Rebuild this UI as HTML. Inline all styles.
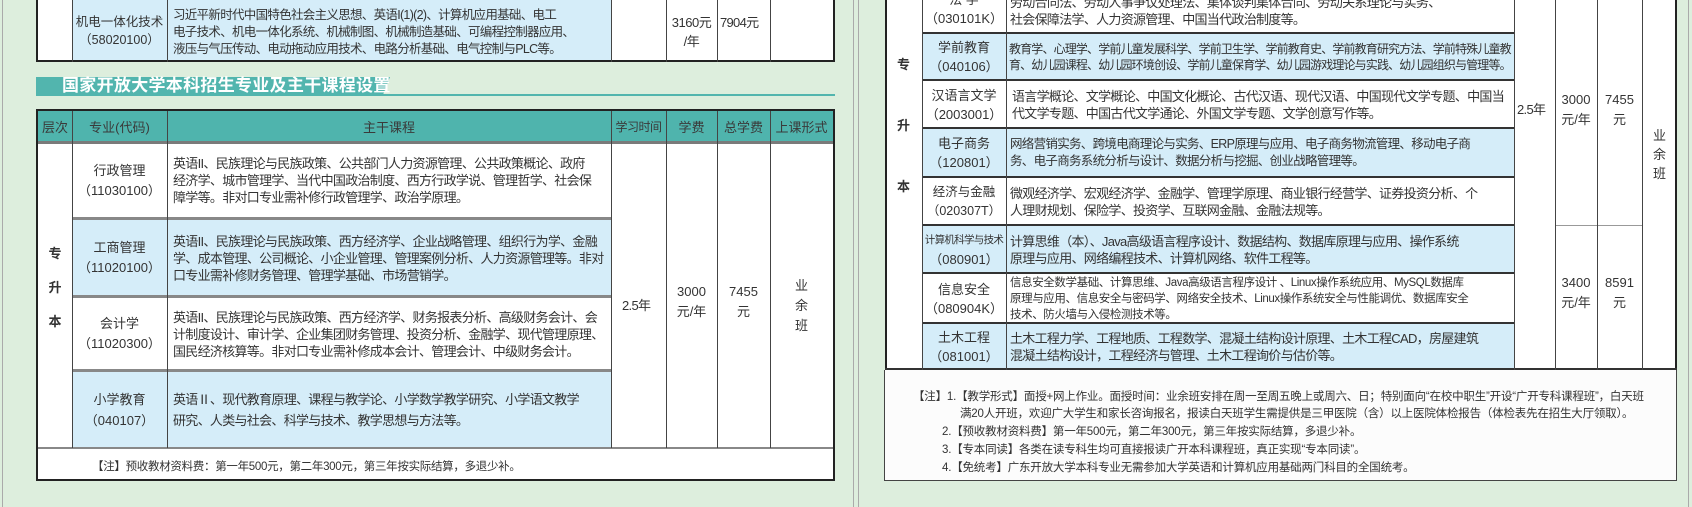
<!DOCTYPE html>
<html><head><meta charset="utf-8"><style>
*{margin:0;padding:0;box-sizing:border-box}
body{width:1692px;height:507px;background:#ddeedd;position:relative;overflow:hidden;font-family:"Liberation Sans","Noto Sans CJK SC",sans-serif;color:#333}
div{position:absolute}
.t{font-size:13px;line-height:17px;white-space:nowrap;letter-spacing:-0.7px}
.cc{display:flex;align-items:center;justify-content:center;text-align:center;flex-direction:column;font-size:13px;line-height:18px;white-space:nowrap}
.h{display:flex;align-items:center;justify-content:center;font-size:13px;color:#3a3a3a;white-space:nowrap}
</style></head><body>
<div style="left:2px;top:0;width:1px;height:507px;background:#aaa"></div>
<div style="left:853px;top:0;width:1px;height:507px;background:#aaa"></div>
<div style="left:858px;top:0;width:1px;height:507px;background:#aaa"></div>
<div style="left:1688px;top:0;width:1px;height:507px;background:#aaa"></div>

<div style="left:36px;top:-2px;width:799px;height:64px;background:#fff;border:2px solid #222;border-top:none"></div>
<div style="left:72px;top:0;width:539px;height:60px;background:#d5edf9"></div>
<div style="left:72px;top:0;width:1px;height:62px;background:#444"></div>
<div style="left:167px;top:0;width:1px;height:62px;background:#444"></div>
<div style="left:611px;top:0;width:1px;height:62px;background:#444"></div>
<div style="left:666px;top:0;width:1px;height:62px;background:#444"></div>
<div style="left:717px;top:0;width:1px;height:62px;background:#444"></div>
<div style="left:770px;top:0;width:1px;height:62px;background:#444"></div>
<div class="cc" style="left:72px;top:0;width:95px;height:62px;font-size:12.5px">机电一体化技术<br>（58020100）</div>
<div class="t" style="left:173px;top:7px;font-size:12.5px">习近平新时代中国特色社会主义思想、英语I(1)(2)、计算机应用基础、电工<br>电子技术、机电一体化系统、机械制图、机械制造基础、可编程控制器应用、<br>液压与气压传动、电动拖动应用技术、电路分析基础、电气控制与PLC等。</div>
<div class="cc" style="left:666px;top:12px;width:51px;height:40px;line-height:19px;letter-spacing:-0.5px">3160元<br>/年</div>
<div class="t" style="left:720px;top:14px">7904元</div>

<div style="left:36px;top:77px;width:354px;height:18px;background:#52b5ae;clip-path:polygon(0 0,100% 0,98% 100%,0 100%)"></div>
<div style="left:36px;top:94px;width:799px;height:2px;background:#52b5ae"></div>
<div style="left:62px;top:76px;font-size:17px;line-height:20px;font-weight:bold;color:#fff;letter-spacing:0.3px;white-space:nowrap">国家开放大学本科招生专业及主干课程设置</div>

<div style="left:36px;top:109px;width:799px;height:372px;background:#fff;border:2px solid #222"></div>
<div style="left:38px;top:111px;width:795px;height:32px;background:#4fb4ad"></div>
<div style="left:38px;top:141px;width:795px;height:3px;background:#7a7a7a"></div>
<div style="left:72px;top:218px;width:539px;height:78px;background:#d5edf9"></div>
<div style="left:72px;top:370px;width:539px;height:78px;background:#d5edf9"></div>
<div style="left:72px;top:217px;width:539px;height:3px;background:#888"></div>
<div style="left:72px;top:295px;width:539px;height:3px;background:#888"></div>
<div style="left:72px;top:369px;width:539px;height:3px;background:#888"></div>
<div style="left:38px;top:447px;width:795px;height:2px;background:#888"></div>
<div style="left:72px;top:111px;width:1px;height:337px;background:#444"></div>
<div style="left:167px;top:111px;width:1px;height:337px;background:#444"></div>
<div style="left:611px;top:111px;width:1px;height:337px;background:#444"></div>
<div style="left:666px;top:111px;width:1px;height:337px;background:#444"></div>
<div style="left:717px;top:111px;width:1px;height:337px;background:#444"></div>
<div style="left:770px;top:111px;width:1px;height:337px;background:#444"></div>
<div class="h" style="left:38px;top:111px;width:34px;height:31px">层次</div>
<div class="h" style="left:72px;top:111px;width:95px;height:31px">专业(代码)</div>
<div class="h" style="left:167px;top:111px;width:444px;height:31px">主干课程</div>
<div class="h" style="left:611px;top:111px;width:55px;height:31px;font-size:12px;letter-spacing:-0.5px">学习时间</div>
<div class="h" style="left:666px;top:111px;width:51px;height:31px">学费</div>
<div class="h" style="left:717px;top:111px;width:53px;height:31px">总学费</div>
<div class="h" style="left:770px;top:111px;width:63px;height:31px">上课形式</div>

<div class="cc" style="left:38px;top:240px;width:34px;height:96px;font-weight:bold;line-height:34px">专<br>升<br>本</div>
<div class="cc" style="left:72px;top:143px;width:95px;height:75px;line-height:20px">行政管理<br>（11030100）</div>
<div class="t" style="left:173px;top:155px">英语II、民族理论与民族政策、公共部门人力资源管理、公共政策概论、政府<br>经济学、城市管理学、当代中国政治制度、西方行政学说、管理哲学、社会保<br>障学等。非对口专业需补修行政管理学、政治学原理。</div>
<div class="cc" style="left:72px;top:220px;width:95px;height:76px;line-height:20px">工商管理<br>（11020100）</div>
<div class="t" style="left:173px;top:233px">英语II、民族理论与民族政策、西方经济学、企业战略管理、组织行为学、金融<br>学、成本管理、公司概论、小企业管理、管理案例分析、人力资源管理等。非对<br>口专业需补修财务管理、管理学基础、市场营销学。</div>
<div class="cc" style="left:72px;top:298px;width:95px;height:72px;line-height:20px">会计学<br>（11020300）</div>
<div class="t" style="left:173px;top:309px">英语II、民族理论与民族政策、西方经济学、财务报表分析、高级财务会计、会<br>计制度设计、审计学、企业集团财务管理、投资分析、金融学、现代管理原理、<br>国民经济核算等。非对口专业需补修成本会计、管理会计、中级财务会计。</div>
<div class="cc" style="left:72px;top:372px;width:95px;height:76px;line-height:21px">小学教育<br>（040107）</div>
<div class="t" style="left:173px;top:389px;line-height:21px">英语Ⅱ、现代教育原理、课程与教学论、小学数学教学研究、小学语文教学<br>研究、人类与社会、科学与技术、教学思想与方法等。</div>
<div class="t" style="left:622px;top:297px">2.5年</div>
<div class="cc" style="left:666px;top:282px;width:51px;height:40px;line-height:20px">3000<br>元/年</div>
<div class="cc" style="left:717px;top:282px;width:53px;height:40px;line-height:20px">7455<br>元</div>
<div class="cc" style="left:770px;top:276px;width:63px;height:60px;line-height:20px">业<br>余<br>班</div>
<div class="t" style="left:92px;top:459px;font-size:11.5px;letter-spacing:-0.3px">【注】预收教材资料费：第一年500元，第二年300元，第三年按实际结算，多退少补。</div>

<div style="left:885px;top:-4px;width:792px;height:376px;background:#fff;border:2px solid #222;border-top:none"></div>
<div style="left:922px;top:33px;width:592px;height:47px;background:#d5edf9"></div>
<div style="left:922px;top:128px;width:592px;height:49px;background:#d5edf9"></div>
<div style="left:922px;top:225px;width:592px;height:48px;background:#d5edf9"></div>
<div style="left:922px;top:323px;width:592px;height:47px;background:#d5edf9"></div>
<div style="left:922px;top:32px;width:592px;height:2px;background:#333"></div>
<div style="left:922px;top:79px;width:592px;height:2px;background:#333"></div>
<div style="left:922px;top:127px;width:592px;height:2px;background:#333"></div>
<div style="left:922px;top:176px;width:592px;height:2px;background:#333"></div>
<div style="left:922px;top:224px;width:592px;height:2px;background:#333"></div>
<div style="left:922px;top:272px;width:592px;height:2px;background:#333"></div>
<div style="left:922px;top:322px;width:592px;height:2px;background:#333"></div>
<div style="left:1555px;top:225px;width:87px;height:1px;background:#999"></div>
<div style="left:885px;top:368px;width:792px;height:3px;background:#333"></div>
<div style="left:922px;top:0;width:1px;height:370px;background:#444"></div>
<div style="left:1006px;top:0;width:1px;height:370px;background:#444"></div>
<div style="left:1514px;top:0;width:1px;height:370px;background:#444"></div>
<div style="left:1555px;top:0;width:1px;height:370px;background:#444"></div>
<div style="left:1597px;top:0;width:1px;height:370px;background:#444"></div>
<div style="left:1642px;top:0;width:1px;height:370px;background:#444"></div>

<div class="cc" style="left:885px;top:50px;width:37px;height:150px;font-weight:bold;line-height:61px">专<br>升<br>本</div>

<div class="cc" style="left:922px;top:-15px;width:84px;height:48px;line-height:19px">法 学<br>（030101K）</div>
<div class="t" style="left:1010px;top:-6px">劳动合同法、劳动人事争议处理法、集体谈判集体合同、劳动关系理论与实务、<br>社会保障法学、人力资源管理、中国当代政治制度等。</div>
<div class="cc" style="left:922px;top:34px;width:84px;height:46px;line-height:19px">学前教育<br>（040106）</div>
<div class="t" style="left:1009px;top:41px;font-size:12px;line-height:16px;letter-spacing:-0.85px">教育学、心理学、学前儿童发展科学、学前卫生学、学前教育史、学前教育研究方法、学前特殊儿童教<br>育、幼儿园课程、幼儿园环境创设、学前儿童保育学、幼儿园游戏理论与实践、幼儿园组织与管理等。</div>
<div class="cc" style="left:922px;top:81px;width:84px;height:47px;line-height:19px">汉语言文学<br>（2003001）</div>
<div class="t" style="left:1012px;top:88px">语言学概论、文学概论、中国文化概论、古代汉语、现代汉语、中国现代文学专题、中国当<br>代文学专题、中国古代文学通论、外国文学专题、文学创意写作等。</div>
<div class="cc" style="left:922px;top:129px;width:84px;height:48px;line-height:19px">电子商务<br>（120801）</div>
<div class="t" style="left:1010px;top:136px;font-size:12.5px">网络营销实务、跨境电商理论与实务、ERP原理与应用、电子商务物流管理、移动电子商<br>务、电子商务系统分析与设计、数据分析与挖掘、创业战略管理等。</div>
<div class="cc" style="left:922px;top:178px;width:84px;height:47px;line-height:19px;font-size:12.5px">经济与金融<br>（020307T）</div>
<div class="t" style="left:1010px;top:185px">微观经济学、宏观经济学、金融学、管理学原理、商业银行经营学、证券投资分析、个<br>人理财规划、保险学、投资学、互联网金融、金融法规等。</div>
<div class="cc" style="left:922px;top:226px;width:84px;height:47px;line-height:19px"><span style="font-size:10.5px;letter-spacing:-0.7px">计算机科学与技术</span>（080901）</div>
<div class="t" style="left:1010px;top:233px">计算思维（本）、Java高级语言程序设计、数据结构、数据库原理与应用、操作系统<br>原理与应用、网络编程技术、计算机网络、软件工程等。</div>
<div class="cc" style="left:922px;top:274px;width:84px;height:49px;line-height:19px">信息安全<br>（080904K）</div>
<div class="t" style="left:1010px;top:275px;font-size:11.5px;line-height:16px;letter-spacing:-0.4px">信息安全数学基础、计算思维、Java高级语言程序设计 、Linux操作系统应用、MySQL数据库<br>原理与应用、信息安全与密码学、网络安全技术、Linux操作系统安全与性能调优、数据库安全<br>技术、防火墙与入侵检测技术等。</div>
<div class="cc" style="left:922px;top:324px;width:84px;height:46px;line-height:19px">土木工程<br>（081001）</div>
<div class="t" style="left:1010px;top:330px">土木工程力学、工程地质、工程数学、混凝土结构设计原理、土木工程CAD，房屋建筑<br>混凝土结构设计，工程经济与管理、土木工程询价与估价等。</div>

<div class="t" style="left:1517px;top:101px">2.5年</div>
<div class="cc" style="left:1555px;top:90px;width:42px;height:40px;line-height:20px">3000<br>元/年</div>
<div class="cc" style="left:1597px;top:90px;width:45px;height:40px;line-height:20px">7455<br>元</div>
<div class="cc" style="left:1642px;top:124px;width:35px;height:60px;line-height:19px">业<br>余<br>班</div>
<div class="cc" style="left:1555px;top:273px;width:42px;height:40px;line-height:20px">3400<br>元/年</div>
<div class="cc" style="left:1597px;top:273px;width:45px;height:40px;line-height:20px">8591<br>元</div>

<div style="left:884px;top:370px;width:793px;height:111px;background:#fcfcfc;border:1px solid #444;border-top:none"></div>
<div class="t" style="left:913px;top:388px;font-size:11.5px;line-height:18px;letter-spacing:-0.2px">【注】1.【教学形式】面授+网上作业。面授时间：业余班安排在周一至周五晚上或周六、日；特别面向“在校中职生”开设“广开专科课程班”，白天班</div>
<div class="t" style="left:960px;top:405px;font-size:11.5px;line-height:18px;letter-spacing:-0.2px">满20人开班，欢迎广大学生和家长咨询报名，报读白天班学生需提供是三甲医院（含）以上医院体检报告（体检表先在招生大厅领取）。</div>
<div class="t" style="left:942px;top:423px;font-size:11.5px;line-height:18px;letter-spacing:-0.2px">2.【预收教材资料费】第一年500元，第二年300元，第三年按实际结算，多退少补。</div>
<div class="t" style="left:942px;top:441px;font-size:11.5px;line-height:18px;letter-spacing:-0.2px">3.【专本同读】各类在读专科生均可直接报读广开本科课程班，真正实现“专本同读”。</div>
<div class="t" style="left:942px;top:459px;font-size:11.5px;line-height:18px;letter-spacing:-0.2px">4.【免统考】广东开放大学本科专业无需参加大学英语和计算机应用基础两门科目的全国统考。</div>
</body></html>
